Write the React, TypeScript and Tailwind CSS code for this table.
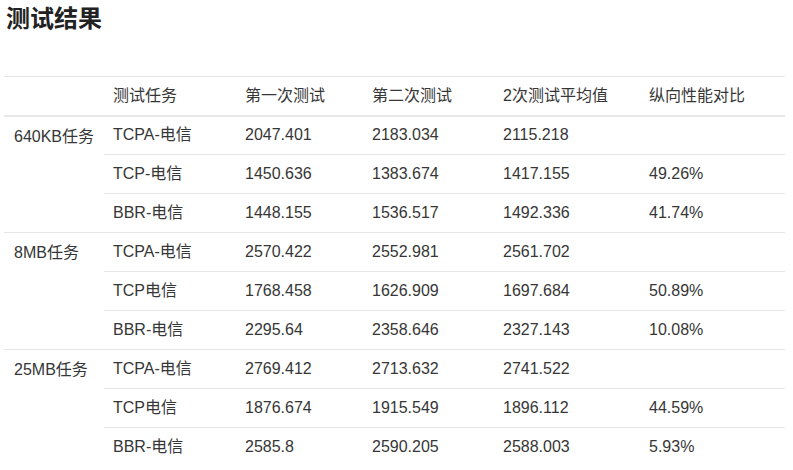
const groups = [
  {
    name: '640KB任务',
    rows: [
      ['TCPA-电信', '2047.401', '2183.034', '2115.218', ''],
      ['TCP-电信', '1450.636', '1383.674', '1417.155', '49.26%'],
      ['BBR-电信', '1448.155', '1536.517', '1492.336', '41.74%'],
    ],
  },
  {
    name: '8MB任务',
    rows: [
      ['TCPA-电信', '2570.422', '2552.981', '2561.702', ''],
      ['TCP电信', '1768.458', '1626.909', '1697.684', '50.89%'],
      ['BBR-电信', '2295.64', '2358.646', '2327.143', '10.08%'],
    ],
  },
  {
    name: '25MB任务',
    rows: [
      ['TCPA-电信', '2769.412', '2713.632', '2741.522', ''],
      ['TCP电信', '1876.674', '1915.549', '1896.112', '44.59%'],
      ['BBR-电信', '2585.8', '2590.205', '2588.003', '5.93%'],
    ],
  },
];

const headers = ['测试任务', '第一次测试', '第二次测试', '2次测试平均值', '纵向性能对比'];

export default function App() {
  return (
    <div
      className="w-[793px] h-[470px] bg-white overflow-hidden text-[#363636]"
      style={{ fontFamily: '"Liberation Sans", "Noto Sans CJK SC", sans-serif' }}
    >
      <h1 className="pl-[6px] pt-[5px] text-[24px] leading-[28px] font-bold text-[#222]">测试结果</h1>
      <table className="ml-[4px] mt-[43px] w-[781px] border-collapse table-fixed text-[16px]">
        <colgroup>
          <col className="w-[100px]" />
          <col className="w-[132px]" />
          <col className="w-[127px]" />
          <col className="w-[131px]" />
          <col className="w-[146px]" />
          <col className="w-[145px]" />
        </colgroup>
        <thead>
          <tr className="h-[39px] border-t border-[#e6e6e6] border-b-2 border-b-[#e8e8e8]">
            <th />
            {headers.map((h) => (
              <th key={h} className="pl-[9px] text-left font-normal">
                {h}
              </th>
            ))}
          </tr>
        </thead>
        <tbody>
          {groups.map((g, gi) =>
            g.rows.map((r, i) => {
              const last = gi === groups.length - 1 && i === 2;
              return (
                <tr key={g.name + i} className="h-[39px]">
                  {i === 0 && (
                    <td
                      rowSpan={3}
                      className={`align-top pl-[10px] pt-[8px] ${last || gi === groups.length - 1 ? '' : 'border-b border-[#e6e6e6]'}`}
                    >
                      {g.name}
                    </td>
                  )}
                  {r.map((c, j) => (
                    <td key={j} className={`pl-[9px] ${last ? '' : 'border-b border-[#e6e6e6]'}`}>
                      {c}
                    </td>
                  ))}
                </tr>
              );
            })
          )}
        </tbody>
      </table>
    </div>
  );
}
